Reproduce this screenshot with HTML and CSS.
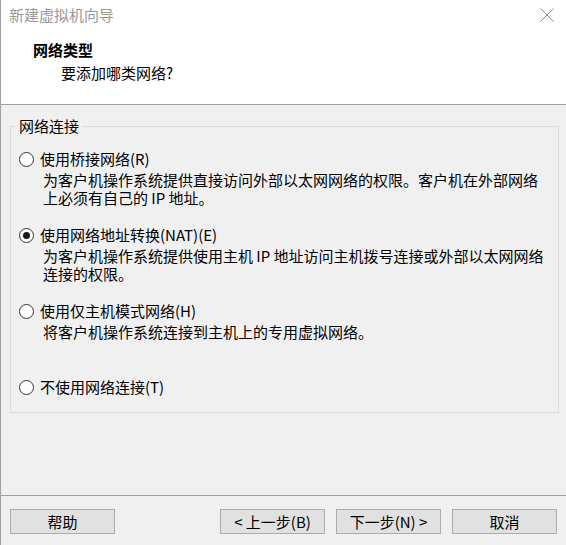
FILE: index.html
```html
<!DOCTYPE html>
<html lang="zh-CN">
<head>
<meta charset="utf-8">
<title>新建虚拟机向导</title>
<link rel="stylesheet" href="styles.css">
</head>
<body>
<div class="window">
  <div class="titlebar">
    <span class="title">新建虚拟机向导</span>
    <svg class="close" width="14" height="14" viewBox="0 0 14 14"><path d="M0.5 0.5 L13.5 13.5 M13.5 0.5 L0.5 13.5" stroke="#8c8c8c" stroke-width="1" fill="none"/></svg>
  </div>
  <div class="header">
    <div class="h-title">网络类型</div>
    <div class="h-sub">要添加哪类网络?</div>
  </div>
  <div class="main">
    <fieldset class="group">
      <legend class="legend">网络连接</legend>
      <div class="option">
        <div class="opt-row"><span class="radio"></span><span>使用桥接网络(R)</span></div>
        <div class="desc">
          <div class="line">为客户机操作系统提供直接访问外部以太网网络的权限。客户机在外部网络</div>
          <div class="line">上必须有自己的 IP 地址。</div>
        </div>
      </div>
      <div class="option">
        <div class="opt-row"><span class="radio checked"></span><span>使用网络地址转换(NAT)(E)</span></div>
        <div class="desc">
          <div class="line">为客户机操作系统提供使用主机 IP 地址访问主机拨号连接或外部以太网网络</div>
          <div class="line">连接的权限。</div>
        </div>
      </div>
      <div class="option">
        <div class="opt-row"><span class="radio"></span><span>使用仅主机模式网络(H)</span></div>
        <div class="desc">
          <div class="line">将客户机操作系统连接到主机上的专用虚拟网络。</div>
        </div>
      </div>
      <div class="option last">
        <div class="opt-row"><span class="radio"></span><span>不使用网络连接(T)</span></div>
      </div>
    </fieldset>
  </div>
  <div class="footer">
    <button class="btn">帮助</button>
    <div class="spacer"></div>
    <button class="btn">&lt; 上一步(B)</button>
    <button class="btn">下一步(N) &gt;</button>
    <button class="btn">取消</button>
  </div>
</div>
</body>
</html>
```

FILE: styles.css
```css
html, body {
  margin: 0;
  padding: 0;
  background: #f0f0f0;
}
.window {
  width: 566px;
  height: 545px;
  box-sizing: border-box;
  border-left: 1px solid #a0a0a0;
  background: #f0f0f0;
  display: flex;
  flex-direction: column;
  font-family: "Noto Sans CJK SC", "Microsoft YaHei", sans-serif;
  font-size: 15px;
  color: #000;
}
.titlebar {
  height: 33px;
  flex: none;
  background: #fff;
  display: flex;
  align-items: flex-start;
  justify-content: space-between;
  padding: 5px 12px 0 8px;
  box-sizing: border-box;
}
.title {
  line-height: 20px;
  color: #999;
}
.close {
  margin-top: 3px;
  display: block;
}
.header {
  height: 72px;
  flex: none;
  box-sizing: border-box;
  background: #fff;
  border-bottom: 1px solid #a0a0a0;
  padding: 6px 0 0 32px;
}
.h-title {
  font-weight: bold;
  line-height: 22px;
}
.h-sub {
  line-height: 22px;
  padding-left: 28px;
  margin-top: 1px;
}
.main {
  flex: 1;
  padding: 11px 7px 0 9px;
}
.group {
  margin: 0;
  border: 1px solid #dcdcdc;
  padding: 13px 0 15px 8px;
  min-width: 0;
}
.legend {
  padding: 0 3px;
  margin-left: -3px;
  line-height: 20px;
}
.option {
  height: 76px;
}
.option.last {
  height: auto;
}
.opt-row {
  display: flex;
  align-items: center;
  gap: 6px;
  height: 20px;
  line-height: 20px;
}
.radio {
  width: 15px;
  height: 15px;
  box-sizing: border-box;
  border: 1px solid #333;
  border-radius: 50%;
  background: #fff;
  flex: none;
  display: flex;
  align-items: center;
  justify-content: center;
}
.radio.checked::after {
  content: "";
  width: 7px;
  height: 7px;
  border-radius: 50%;
  background: #1a1a1a;
}
.desc {
  padding-left: 24px;
  margin-top: 2px;
}
.line {
  height: 18px;
  line-height: 18px;
  white-space: nowrap;
}
.footer {
  flex: none;
  height: 50px;
  box-sizing: border-box;
  border-top: 1px solid #a0a0a0;
  padding: 13px 9px 0 9px;
  display: flex;
  align-items: flex-start;
  gap: 11px;
}
.spacer {
  flex: 1;
}
.btn {
  width: 105px;
  height: 25px;
  box-sizing: border-box;
  border: 1px solid #adadad;
  background: #e1e1e1;
  font-family: "Noto Sans CJK SC", "Microsoft YaHei", sans-serif;
  font-size: 15px;
  line-height: 20px;
  color: #000;
  padding: 0;
  margin: 0;
}
```
